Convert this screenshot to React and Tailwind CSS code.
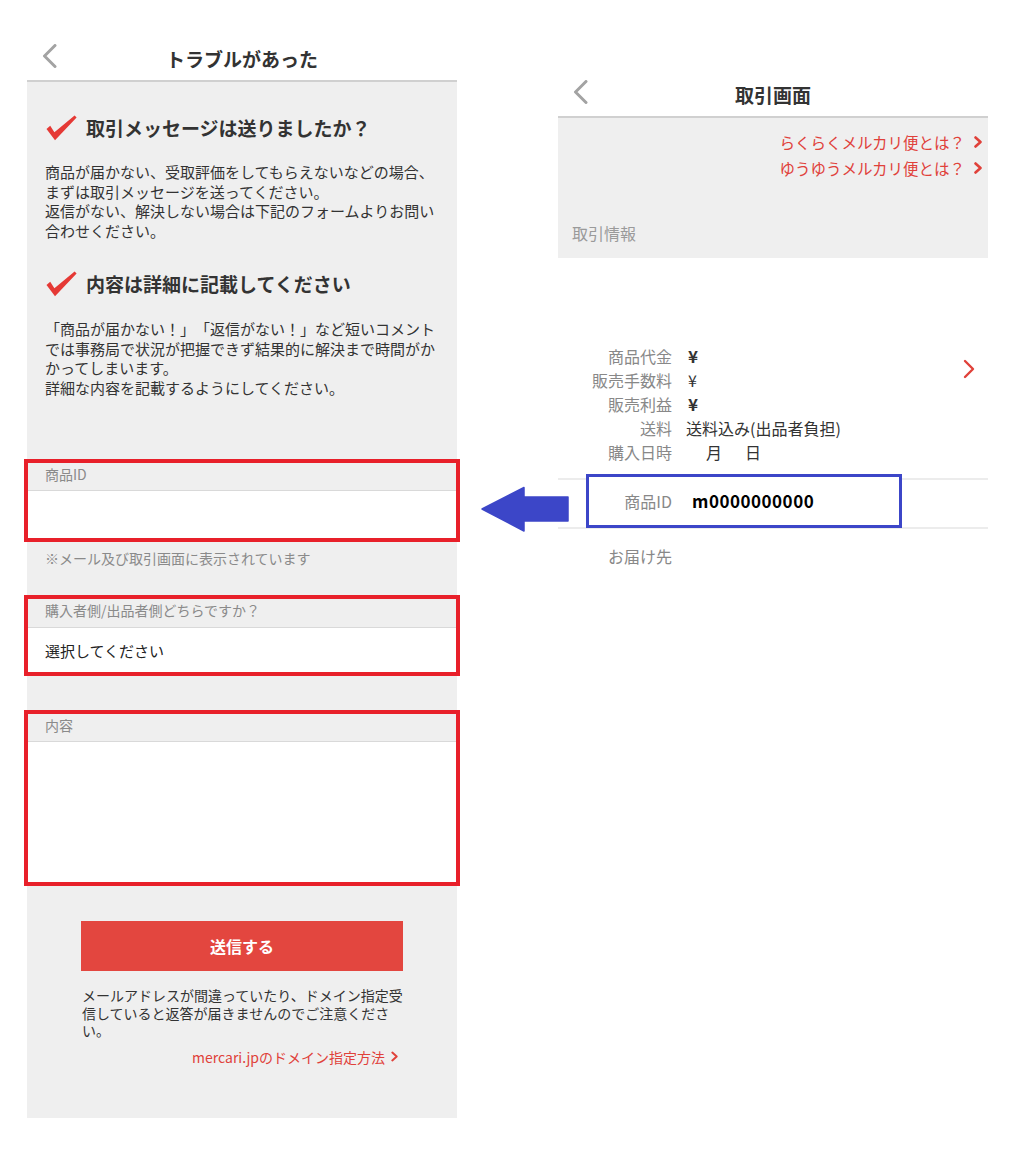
const FONT = "font-['Noto_Sans_CJK_JP','Noto_Sans',sans-serif]";

function BackChevron() {
  return (
    <svg width="16" height="24" viewBox="0 0 16 24" fill="none">
      <path d="M13 1.5 L2.5 12 L13 22.5" stroke="#a3a3a3" strokeWidth="3" strokeLinecap="round" strokeLinejoin="round" />
    </svg>
  );
}

function SmallChevron({ w = 8, h = 12, stroke = 2.6 }) {
  return (
    <svg width={w} height={h} viewBox="0 0 8 12" fill="none" className="shrink-0">
      <path d="M1.5 1.5 L6.5 6 L1.5 10.5" stroke="#e0413a" strokeWidth={stroke} strokeLinecap="round" strokeLinejoin="round" />
    </svg>
  );
}

function Check() {
  return (
    <svg width="31" height="26" viewBox="0 0 31 26" className="shrink-0">
      <path d="M0.5 14 L4.2 10.8 L8.4 17.2 L28.6 0.6 L30.6 2.6 L9 25.2 Z" fill="#e53935" />
    </svg>
  );
}

function Header({ title }) {
  return (
    <div className="grid grid-cols-[40px_1fr_40px] h-[82px] border-b-2 border-[#d0d0d0] bg-white pt-[44px]">
      <div className="pl-[15px]">
        <BackChevron />
      </div>
      <div className="text-center text-[19px] leading-[26px] mt-[2px] font-bold text-[#333]">{title}</div>
      <div />
    </div>
  );
}

function Heading({ children, className = "" }) {
  return (
    <div className={`flex items-center h-[26px] pl-[19px] gap-[9px] ${className}`}>
      <Check />
      <span className="text-[19px] font-bold text-[#333] leading-[26px]">{children}</span>
    </div>
  );
}

function Field({ label, bodyH, labelH, className = "", children }) {
  return (
    <div className={`-mx-[3px] border-4 border-[#e8202a] ${className}`}>
      <div
        className={`pl-[17px] pt-[2px] text-[14px] leading-[18px] text-[#8a8a8a] border-b border-[#d9d9d9] ${labelH}`}
      >
        {label}
      </div>
      <div className={`bg-white ${bodyH}`}>{children}</div>
    </div>
  );
}

function InfoRow({ label, children }) {
  return (
    <div className="flex h-[24px] items-center">
      <div className="w-[114px] text-right text-[16px] leading-[24px] text-[#888]">{label}</div>
      <div className="ml-[16px] text-[16px] leading-[24px] text-[#333] whitespace-nowrap">{children}</div>
    </div>
  );
}

export default function App() {
  return (
    <div className={`relative w-[1024px] h-[1157px] bg-white flex [text-spacing-trim:space-all] ${FONT}`}>
      {/* 左: トラブルがあった */}
      <div className="w-[430px] ml-[27px]">
        <Header title="トラブルがあった" />
        <div className="bg-[#efefef] h-[1036px] pt-[33px]">
          <Heading>取引メッセージは送りましたか？</Heading>
          <p className="mt-[21px] pl-[18px] text-[15px] leading-[19.5px] text-[#333] whitespace-nowrap">
            商品が届かない、受取評価をしてもらえないなどの場合、
            <br />
            まずは取引メッセージを送ってください。
            <br />
            返信がない、解決しない場合は下記のフォームよりお問い
            <br />
            合わせください。
          </p>

          <Heading className="mt-[31px]">内容は詳細に記載してください</Heading>
          <p className="mt-[22px] pl-[18px] text-[15px] leading-[19.5px] text-[#333] whitespace-nowrap">
            「商品が届かない！」「返信がない！」など短いコメント
            <br />
            では事務局で状況が把握できず結果的に解決まで時間がか
            <br />
            かってしまいます。
            <br />
            詳細な内容を記載するようにしてください。
          </p>

          <Field label="商品ID" labelH="h-[28px]" bodyH="h-[47px]" className="mt-[62px]" />
          <p className="mt-[6px] pl-[18px] text-[14px] leading-[20px] text-[#8a8a8a]">
            ※メール及び取引画面に表示されています
          </p>

          <Field label="購入者側/出品者側どちらですか？" labelH="h-[29px]" bodyH="h-[44px]" className="mt-[27px]">
            <div className="pl-[17px] pt-[13px] text-[15px] leading-[20px] text-[#222]">選択してください</div>
          </Field>

          <Field label="内容" labelH="h-[28px]" bodyH="h-[140px]" className="mt-[34px]" />

          <button className="mt-[35px] ml-[54px] w-[322px] h-[50px] bg-[#e3463f] text-white text-[16px] font-bold flex items-center justify-center">
            送信する
          </button>
          <p className="mt-[16px] ml-[55px] text-[14px] leading-[17.5px] text-[#333] whitespace-nowrap">
            メールアドレスが間違っていたり、ドメイン指定受
            <br />
            信していると返答が届きませんのでご注意くださ
            <br />
            い。
          </p>
          <div className="mt-[8px] ml-[54px] w-[322px] pr-[5px] flex justify-end items-center gap-[6px] text-[14px] leading-[18px] text-[#e0413a]">
            <span>mercari.jpのドメイン指定方法</span>
            <SmallChevron w={7} h={11} stroke={2.2} />
          </div>
        </div>
      </div>

      {/* 右: 取引画面 */}
      <div className="w-[430px] ml-[101px] mt-[36px]">
        <Header title="取引画面" />
        <div className="bg-[#efefef] h-[140px] pt-[11px]">
          <div className="flex flex-col items-end pr-[6px] text-[15.5px] leading-[26px] text-[#e0413a]">
            <div className="flex items-center gap-[9px]">
              <span>らくらくメルカリ便とは？</span>
              <SmallChevron />
            </div>
            <div className="flex items-center gap-[9px]">
              <span>ゆうゆうメルカリ便とは？</span>
              <SmallChevron />
            </div>
          </div>
          <div className="mt-[40px] pl-[14px] text-[16px] leading-[24px] text-[#9a9a9a]">取引情報</div>
        </div>

        <div className="pt-[86px] flex">
          <div>
            <InfoRow label="商品代金">
              <span className="font-bold text-[17px]">¥</span>
            </InfoRow>
            <InfoRow label="販売手数料">¥</InfoRow>
            <InfoRow label="販売利益">
              <span className="font-bold text-[17px]">¥</span>
            </InfoRow>
            <InfoRow label="送料">
              <span className="-ml-[2px]">送料込み(出品者負担)</span>
            </InfoRow>
            <InfoRow label="購入日時">
              <span className="ml-[18px]">月</span>
              <span className="ml-[23px]">日</span>
            </InfoRow>
          </div>
          <div className="ml-auto mr-[13px] mt-[15px]">
            <svg width="12" height="20" viewBox="0 0 12 20" fill="none">
              <path d="M2 2 L10 10 L2 18" stroke="#e0413a" strokeWidth="2.4" strokeLinecap="round" strokeLinejoin="round" />
            </svg>
          </div>
        </div>

        <div className="mt-[14px] flex h-[51px] border-y-2 border-[#ececec]">
          <div className="ml-[28px] w-[316px] h-[54px] -mt-[6px] border-[3.5px] border-[#3c46c8] bg-white flex items-center">
            <div className="w-[83px] text-right text-[16px] leading-[24px] text-[#888]">商品ID</div>
            <div className="ml-[20px] text-[17px] leading-[24px] font-bold text-black tracking-[0.5px]">m0000000000</div>
          </div>
        </div>

        <div className="mt-[15px] w-[114px] text-right text-[16px] leading-[24px] text-[#888]">お届け先</div>
      </div>

      {/* 矢印 */}
      <svg className="absolute left-[481px] top-[486px]" width="88" height="46" viewBox="0 0 88 46">
        <path d="M1 23 L43 1.5 L43 11 L87 11 L87 35 L43 35 L43 45 Z" fill="#3c46c8" stroke="#3c46c8" strokeWidth="1.5" strokeLinejoin="round" />
      </svg>
    </div>
  );
}
